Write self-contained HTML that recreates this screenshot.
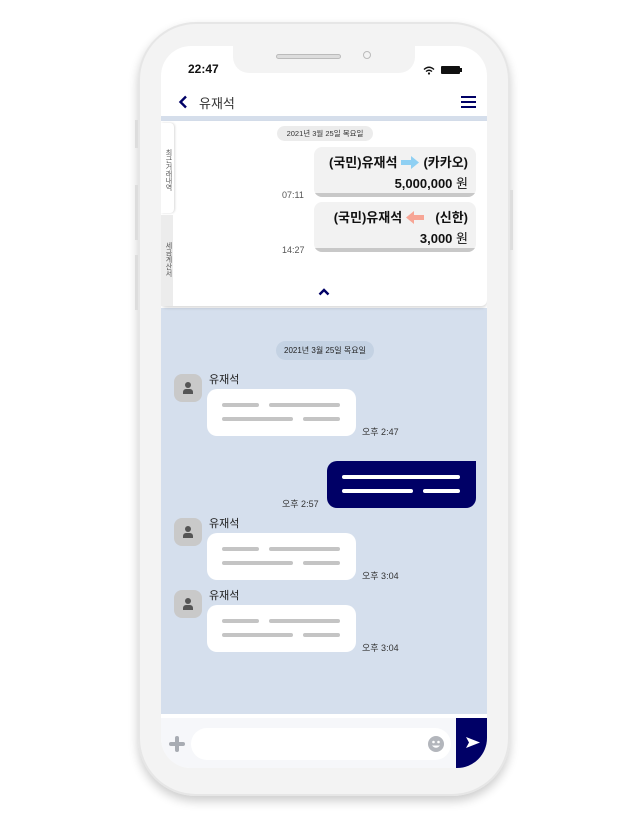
<!DOCTYPE html>
<html><head><meta charset="utf-8"><style>
*{margin:0;padding:0;box-sizing:border-box}
body{width:630px;height:830px;background:#fff;position:relative;overflow:hidden;font-family:"Liberation Sans","Noto Sans CJK KR",sans-serif}
.a{position:absolute}
.phone{left:138px;top:22px;width:372px;height:774px;border-radius:58px;background:#f3f3f3;box-shadow:0 5px 10px rgba(0,0,0,.2),inset 0 0 0 2px #e6e6e6}
.screen{left:161px;top:46px;width:326px;height:722px;border-radius:30px;background:#fff;overflow:hidden}
.notch{left:72px;top:0;width:182px;height:27px;background:#f3f3f3;border-radius:0 0 16px 16px}
.line{height:4px;border-radius:2px;background:#c4c4c4;position:absolute}
.wl{height:4px;border-radius:2px;background:#fff;position:absolute}
.t{font-size:9px;color:#333;position:absolute}
.av{width:28px;height:28px;border-radius:8px;background:#c9c9c9;position:absolute}
.av:before{content:"";position:absolute;left:11px;top:8px;width:6px;height:6px;border-radius:50%;background:#555}
.av:after{content:"";position:absolute;left:9px;top:15px;width:10px;height:5px;border-radius:3px 3px 0 0;background:#555}
.nm{font-size:11px;color:#222;position:absolute}
.bub{background:#fff;border-radius:10px;position:absolute;width:149px;height:47px}
.card{position:absolute;left:153px;width:162px;height:50px;background:#f2f2f2;border-radius:8px;overflow:hidden;font-size:13px;font-weight:bold;color:#111;text-align:right;padding-right:8px}
.card .bar{position:absolute;left:0;bottom:0;width:100%;height:4px;background:#c8c8c8}
.card svg{vertical-align:-2px;margin:0 4px}
</style></head><body>
<div class="a phone"></div>
<div class="a" style="left:135px;top:120px;width:3px;height:28px;background:#ddd"></div>
<div class="a" style="left:135px;top:185px;width:3px;height:55px;background:#ddd"></div>
<div class="a" style="left:135px;top:255px;width:3px;height:55px;background:#ddd"></div>
<div class="a" style="left:510px;top:190px;width:3px;height:60px;background:#ddd"></div>
<div class="a screen">
  <div class="a notch"></div>
  <div class="a" style="left:115px;top:8px;width:65px;height:5px;border-radius:3px;background:#ddd;border:1px solid #bbb"></div>
  <div class="a" style="left:202px;top:5px;width:8px;height:8px;border-radius:50%;border:1.5px solid #bbb"></div>
  <div class="a" style="left:27px;top:16px;font-size:12px;font-weight:bold;color:#111">22:47</div>
  <svg class="a" style="left:262px;top:20px" width="12" height="9" viewBox="0 0 12 9"><path d="M1 3.5Q6-1 11 3.5M3 5.5Q6 3 9 5.5" stroke="#111" stroke-width="1.4" fill="none"/><circle cx="6" cy="7.5" r="1.1" fill="#111"/></svg>
  <div class="a" style="left:280px;top:20px;width:19px;height:8px;background:#111;border-radius:1px"></div>
  <div class="a" style="left:299px;top:22px;width:2px;height:4px;background:#111"></div>
  <svg class="a" style="left:17px;top:49px" width="10" height="14" viewBox="0 0 10 14"><path d="M8 1.5L2.5 7 8 12.5" stroke="#000066" stroke-width="2.4" fill="none"/></svg>
  <div class="a" style="left:38px;top:47px;font-size:13px;color:#333">유재석</div>
  <div class="a" style="left:300px;top:50px;width:15px;height:2px;background:#000066;box-shadow:0 5px 0 #000066,0 10px 0 #000066"></div>
  <div class="a" style="left:0;top:70px;width:326px;height:5px;background:#d5deeb"></div>
  <div class="a" style="left:0;top:262px;width:326px;height:406px;background:#d5dfed"></div>
  <div class="a" style="left:0;top:75px;width:326px;height:185px;background:#fff;box-shadow:0 2px 3px rgba(0,0,0,.15);border-radius:0 0 6px 6px"></div>
  <div class="a" style="left:0;top:169px;width:12px;height:91px;background:#ececec"></div>
  <div class="a" style="left:0;top:77px;width:13px;height:90px;background:#fff;border-radius:0 4px 4px 0;box-shadow:1px 0 2px rgba(0,0,0,.15)"></div>
  <div class="a" style="left:2px;top:103px;font-size:7px;color:#555;writing-mode:vertical-rl">최근거래내역</div>
  <div class="a" style="left:2px;top:196px;font-size:7px;color:#555;writing-mode:vertical-rl">세금계산서</div>
  <div class="a" style="left:116px;top:80px;width:96px;height:15px;border-radius:8px;background:#ececec;font-size:7.5px;color:#333;text-align:center;line-height:15px">2021년 3월 25일 목요일</div>
  <div class="card" style="top:101px"><div style="margin-top:5px">(국민)유재석<svg width="18" height="13" viewBox="0 0 18 13"><path d="M0 4H10V0L18 6.5 10 13V9H0Z" fill="#8fd0f3"/></svg>(카카오)</div><div style="margin-top:2px">5,000,000 <span style="font-weight:normal">원</span></div><div class="bar"></div></div>
  <div class="card" style="top:156px"><div style="margin-top:5px">(국민)유재석<svg width="18" height="13" viewBox="0 0 18 13"><path d="M18 4H8V0L0 6.5 8 13V9H18Z" fill="#f7a595"/></svg>&nbsp; (신한)</div><div style="margin-top:2px">3,000 <span style="font-weight:normal">원</span></div><div class="bar"></div></div>
  <div class="t" style="left:121px;top:144px;color:#555">07:11</div>
  <div class="t" style="left:121px;top:199px;color:#555">14:27</div>
  <svg class="a" style="left:157px;top:242px" width="12" height="8" viewBox="0 0 12 8"><path d="M1.5 6.5L6 2 10.5 6.5" stroke="#000066" stroke-width="2.4" fill="none"/></svg>
  <div class="a" style="left:115px;top:295px;width:98px;height:19px;border-radius:10px;background:#c4d2e3;font-size:8px;color:#222;text-align:center;line-height:19px">2021년 3월 25일 목요일</div>

  <div class="av" style="left:13px;top:328px"></div>
  <div class="nm" style="left:48px;top:325px">유재석</div>
  <div class="bub" style="left:46px;top:343px"><div class="line" style="left:15px;top:14px;width:37px"></div><div class="line" style="left:62px;top:14px;width:71px"></div><div class="line" style="left:15px;top:28px;width:71px"></div><div class="line" style="left:96px;top:28px;width:37px"></div></div>
  <div class="t" style="left:201px;top:379px">오후 2:47</div>

  <div class="a" style="left:166px;top:415px;width:149px;height:47px;background:#000066;border-radius:10px 0 10px 10px"><div class="wl" style="left:15px;top:14px;width:118px"></div><div class="wl" style="left:15px;top:28px;width:71px"></div><div class="wl" style="left:96px;top:28px;width:37px"></div></div>
  <div class="t" style="left:121px;top:451px">오후 2:57</div>

  <div class="av" style="left:13px;top:472px"></div>
  <div class="nm" style="left:48px;top:469px">유재석</div>
  <div class="bub" style="left:46px;top:487px"><div class="line" style="left:15px;top:14px;width:37px"></div><div class="line" style="left:62px;top:14px;width:71px"></div><div class="line" style="left:15px;top:28px;width:71px"></div><div class="line" style="left:96px;top:28px;width:37px"></div></div>
  <div class="t" style="left:201px;top:523px">오후 3:04</div>

  <div class="av" style="left:13px;top:544px"></div>
  <div class="nm" style="left:48px;top:541px">유재석</div>
  <div class="bub" style="left:46px;top:559px"><div class="line" style="left:15px;top:14px;width:37px"></div><div class="line" style="left:62px;top:14px;width:71px"></div><div class="line" style="left:15px;top:28px;width:71px"></div><div class="line" style="left:96px;top:28px;width:37px"></div></div>
  <div class="t" style="left:201px;top:595px">오후 3:04</div>

  <div class="a" style="left:0;top:672px;width:326px;height:50px;background:#f6f7fa"></div>
  <div class="a" style="left:8px;top:696px;width:16px;height:4px;border-radius:2px;background:#a8acb3"></div>
  <div class="a" style="left:14px;top:690px;width:4px;height:16px;border-radius:2px;background:#a8acb3"></div>
  <div class="a" style="left:30px;top:682px;width:260px;height:32px;border-radius:16px;background:#fff"></div>
  <svg class="a" style="left:267px;top:690px" width="16" height="16" viewBox="0 0 16 16"><circle cx="8" cy="8" r="8" fill="#b3b6bc"/><circle cx="5.5" cy="6" r="1.3" fill="#fff"/><circle cx="10.5" cy="6" r="1.3" fill="#fff"/><path d="M4 9.5Q8 14 12 9.5Z" fill="#fff"/></svg>
  <div class="a" style="left:295px;top:672px;width:31px;height:50px;background:#000066;border-radius:0 0 26px 0"></div>
  <svg class="a" style="left:304px;top:690px" width="16" height="13" viewBox="0 0 16 13"><path d="M1 1L15 6.5 1 12 4 6.5Z" fill="#fff"/></svg>
</div>
</body></html>
